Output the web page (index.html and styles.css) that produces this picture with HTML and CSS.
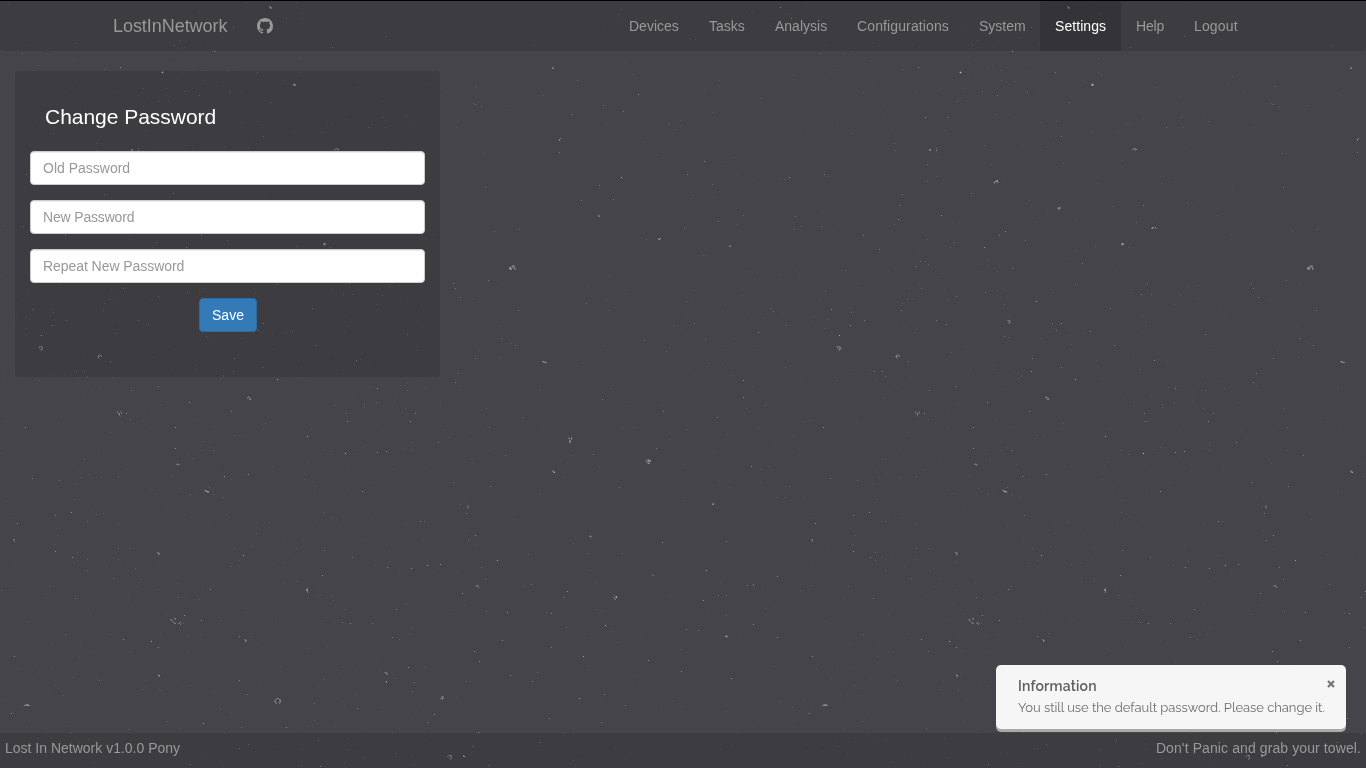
FILE: index.html
```html
<!DOCTYPE html>
<html lang="en">
<head>
<meta charset="utf-8">
<title>LostInNetwork</title>
<link rel="stylesheet" href="styles.css">
</head>
<body>
<canvas class="dust" width="1366" height="768"></canvas>
<div class="page">
  <nav class="navbar">
    <div class="brand-group">
      <a class="brand">LostInNetwork</a>
      <a class="github"><svg width="16" height="16" viewBox="0 0 16 16" fill="currentColor"><path d="M8 0C3.58 0 0 3.58 0 8c0 3.54 2.29 6.53 5.47 7.59.4.07.55-.17.55-.38 0-.19-.01-.82-.01-1.49-2.01.37-2.53-.49-2.69-.94-.09-.23-.48-.94-.82-1.13-.28-.15-.68-.52-.01-.53.63-.01 1.08.58 1.23.82.72 1.21 1.87.87 2.33.66.07-.52.28-.87.51-1.07-1.78-.2-3.64-.89-3.64-3.95 0-.87.31-1.59.82-2.15-.08-.2-.36-1.02.08-2.12 0 0 .67-.21 2.2.82.64-.18 1.32-.27 2-.27s1.36.09 2 .27c1.53-1.04 2.2-.82 2.2-.82.44 1.1.16 1.92.08 2.12.51.56.82 1.27.82 2.15 0 3.07-1.87 3.75-3.65 3.95.29.25.54.73.54 1.48 0 1.07-.01 1.93-.01 2.2 0 .21.15.46.55.38A8.01 8.01 0 0 0 16 8c0-4.42-3.58-8-8-8z"/></svg></a>
    </div>
    <div class="links">
      <a class="w80">Devices</a><a class="w66">Tasks</a><a class="w82">Analysis</a><a class="w122">Configurations</a><a class="w76">System</a><a class="w81 active">Settings</a><a class="w58">Help</a><a class="w74">Logout</a>
    </div>
  </nav>
  <main class="content">
    <form class="panel">
      <h1 class="heading">Change Password</h1>
      <input class="field" type="password" placeholder="Old Password">
      <input class="field tight" type="password" placeholder="New Password">
      <input class="field repeat" type="password" placeholder="Repeat New Password">
      <button class="save" type="button">Save</button>
    </form>
  </main>
  <footer class="footer"><span>Lost In Network v1.0.0 Pony</span><span class="motto">Don't Panic and grab your towel.</span></footer>
</div>
<aside class="toast">
  <div class="toast-title">Information</div>
  <div class="toast-text">You still use the default password. Please change it.</div>
  <svg class="close" width="8" height="8" viewBox="0 0 8 8"><path d="M1 1l6 6M7 1L1 7"/></svg>
</aside>
<script src="dust.js"></script>
</body>
</html>
```

FILE: styles.css
```css
* { box-sizing: border-box; }
body {
  margin: 0;
  height: 768px;
  overflow: hidden;
  background: #454449;
  color: #999;
  font: 14px/20px "Liberation Sans", Arial, sans-serif;
}
.dust { position: absolute; top: 0; left: 0; z-index: -1; }
.page { height: 768px; display: flex; flex-direction: column; }
.navbar {
  height: 51px;
  border-top: 1px solid #000;
  border-radius: 0 0 4px 4px;
  background: rgba(20, 16, 25, .16);
  background-clip: padding-box;
  display: flex;
  justify-content: space-between;
  padding: 0 113px;
}
.brand-group { display: flex; align-items: center; gap: 30px; }
.brand { width: 114px; font-size: 18px; letter-spacing: -.05px; }
.github { display: flex; }
.links { display: flex; }
.links a { padding: 15px 0 15px 15px; white-space: nowrap; }
.w58 { width: 58px; letter-spacing: -.15px; }
.w66 { width: 66px; }
.w74 { width: 74px; letter-spacing: .15px; }
.w76 { width: 76px; }
.w80 { width: 80px; }
.w81 { width: 81px; letter-spacing: .07px; }
.w82 { width: 82px; }
.w122 { width: 122px; letter-spacing: .12px; }
.links .active { background: rgba(20, 20, 20, .2); color: #fff; }
.content { flex: 1; padding: 20px 15px; }
.panel {
  width: 425px;
  height: 306px;
  padding: 34px 15px 0;
  border-radius: 4px;
  background: rgba(20, 16, 25, .16);
  display: flex;
  flex-direction: column;
  gap: 15px;
}
.heading { margin: 0 0 7px; padding-left: 15px; color: #fff; font-size: 21px; line-height: 24px; font-weight: 400; letter-spacing: -.03px; }
.field {
  height: 34px;
  flex: none;
  padding: 6px 12px;
  border: 1px solid #ccc;
  border-radius: 4px;
  background: #fff;
  box-shadow: inset 0 1px 1px rgba(0, 0, 0, .075);
  font: inherit;
}
.field::placeholder { color: #999; opacity: 1; }
.tight::placeholder { letter-spacing: -.17px; }
.repeat::placeholder { letter-spacing: -.06px; }
.save {
  width: 58px;
  height: 34px;
  margin-left: 169px;
  padding: 0;
  border: 1px solid #2e6da4;
  border-radius: 4px;
  background: #337ab7;
  color: #fff;
  font: inherit;
}
.footer {
  height: 35px;
  padding: 5px;
  background: rgba(20, 16, 25, .16);
  display: flex;
  justify-content: space-between;
}
.motto { letter-spacing: .1px; }
.toast {
  position: absolute;
  left: 996px;
  top: 665px;
  width: 350px;
  height: 64px;
  padding: 11px 22px;
  border-radius: 5px;
  background: #f6f6f6;
  box-shadow: 0 3px 0 #a9a9aa;
  color: #6e6e6e;
  font: 13px/21px Raleway, Lato, sans-serif;
  white-space: nowrap;
}
.toast-title { color: #5e5e5e; font-size: 14px; line-height: 21px; font-weight: 600; letter-spacing: .18px; }
.toast-text { letter-spacing: -.035px; }
.close { position: absolute; right: 11px; top: 15px; fill: none; stroke: #777; stroke-width: 2.2; }
```

FILE: dust.js
```js
// Speckled backdrop, repeating every 798px horizontally.
const PERIOD = 798;
const ctx = document.querySelector('.dust').getContext('2d');

function dot(x, y, alpha, w = 1, h = 1) {
  ctx.fillStyle = `rgba(225,225,225,${alpha})`;
  ctx.fillRect(x, y, w, h);
  ctx.fillRect(x + PERIOD, y, w, h);
}

// Single specks grouped by brightness: flat x,y pairs.
const specks = {
  0.17: [245,2,301,13,301,18,38,65,72,60,203,80,168,100,222,37,284,80,143,88,166,88,202,70,224,146,248,147,186,145,321,132,242,122,146,130,619,14,619,19,790,14,625,61,632,74,690,38,669,124,674,129,643,141,657,155,724,166,737,173,780,179,784,179,693,195,543,95,473,103,481,106,508,105,646,239,703,255,473,299,608,310,499,325,511,343,582,363,693,290,764,317,782,314,779,275,755,350,732,375,785,367,709,363,724,345,127,261,152,247,215,266,330,247,204,288,285,332,112,378,362,447,364,404,202,441,39,380,161,404,202,450,88,474,118,559,283,563,321,595,199,599,12,585,181,623,221,620,334,621,344,609,308,648,72,677,342,667,318,685,394,678,344,763,93,762,443,429,448,437,470,459,768,466,777,497,784,497,652,575,671,595,611,631,546,612,680,649,543,750],
  0.3: [174,45,22,53,199,95,229,92,332,47,257,72,138,148,263,136,173,193,104,194,26,174,621,9,623,111,603,105,687,174,577,80,475,104,571,114,559,152,599,185,581,200,613,199,684,228,718,221,795,216,794,229,488,280,453,283,455,288,460,297,518,310,501,338,515,345,475,358,455,382,458,373,694,323,771,308,773,311,786,325,149,117,23,226,65,235,101,205,81,249,117,266,122,261,156,242,201,235,214,268,345,205,349,283,343,294,312,308,187,292,158,296,66,320,103,310,123,288,138,320,148,324,206,336,292,331,258,330,84,371,76,371,110,361,234,358,316,345,131,390,231,411,213,450,346,413,32,478,59,480,324,550,178,597,75,598,342,622,372,623,239,636,392,637,386,681,241,727,357,708,248,744,415,413,505,455,453,482,490,486,593,454,656,448,619,487,663,411,717,417,602,399,468,540,481,567,531,584,563,597,726,595,718,595,698,630,551,647,537,672,427,722,414,682,625,705,549,718,601,722,563,733,158,386,55,515,466,513],
  0.46: [214,51,120,67,162,72,294,85,780,7,791,18,638,94,704,161,789,177,127,117,138,150,758,332,743,380,100,219,143,215,186,247,207,231,33,309,52,325,263,323,233,371,356,360,377,388,189,402,126,413,175,427,175,448,386,451,377,452,347,421,25,427,224,476,248,474,362,491,71,512,17,523,55,551,72,557,322,575,387,567,210,589,184,615,201,620,350,623,396,609,123,639,158,647,14,656,239,680,11,713,286,727,318,740,320,766,410,421,438,442,743,397,751,466,420,521,475,535,440,564,411,568,462,593,567,591,662,542,726,541,747,585,777,576,703,600,686,629,753,624,777,637,507,612,551,613,474,651,479,661,502,640,648,660,681,671,731,678,532,681,510,675,434,714,408,667,604,694,478,732,464,756,473,746,539,742,489,765],
  0.62: [621,177,238,301,41,335,277,379,307,436,243,555,151,641,203,723,497,560,427,565,706,570,605,625,583,656,579,698],
  0.8: [345,453]
};
for (const [alpha, list] of Object.entries(specks)) {
  for (let i = 0; i < list.length; i += 2) dot(list[i], list[i + 1], +alpha);
}

// Multi-pixel flecks: x, y, then rows of brightness digits.
const flecks = [
  [269,6,'320|253|032'],[293,83,'020|353|232'],[334,148,'01320|23034|10020'],[161,71,'020|242|020'],
  [552,67,'22|33'],[559,138,'03|40|30'],[598,215,'32|23'],[658,238,'034|340'],[729,245,'22|33'],
  [509,265,'0002320|0033220|3403230|3530032|2330022'],[542,361,'34200|02343'],[195,180,'000350|023530|230023|020100'],
  [259,207,'1232|2332|0220'],[353,227,'034030|340022'],[323,243,'343|243|020'],[209,320,'2320|0032|0220|0030'],
  [38,346,'12320|03023|02033|00132|00120'],[97,354,'00300|03032|24203|03000|00200'],[247,396,'0200|2320|2023|0033'],
  [117,411,'20020|30003|02302|00400|00200'],[176,463,'0200|2322|0020'],[204,490,'242000|024440|000320'],
  [13,539,'33|02|03'],[157,552,'320|033|030'],[306,588,'03|43|34|03|03'],[170,618,'000033|220002|032000|002000|000220|000032'],
  [178,622,'032|220|003'],[244,639,'220|033|040'],[158,674,'20|43|03'],[24,704,'023320|333443'],
  [274,698,'0023300|0220032|2200023|3200023|0320032|0030020'],[384,672,'2320|0032|0022'],[386,681,'3|3'],
  [568,437,'0203|3204|0103|0230|0430|0320'],[552,470,'210|232|035'],[645,459,'001320|023432|220345|013200|001430'],
  [712,503,'23|34'],[589,535,'020|232|020'],[467,505,'02|30|03|20'],[475,585,'0330|2022|0003'],
  [613,595,'0200|0014|2036|0300|0130'],[725,635,'030|343|020'],[440,696,'0230|0034|3240|0030'],
  [447,755,'02342|20023|02003|00023|00030'],[463,755,'30|44'],[753,584,'3|2'],[652,574,'20|02'],[131,149,'33|33']
];
for (const [x, y, rows] of flecks) {
  rows.split('|').forEach((row, j) => [...row].forEach((v, i) => {
    if (+v) dot(x + i, y + j, v * 0.12);
  }));
}

// Fine dust, thicker toward the lower left of each tile.
let seed = 417;
const rnd = () => (seed = (seed * 16807) % 2147483647) / 2147483647;
for (let i = 0; i < 1700; i++) {
  const x = Math.floor(rnd() * PERIOD), y = Math.floor(rnd() * 768);
  const density = (x < 430 ? 0.6 : 0.13) + (y > 280 ? 0.25 : 0) + (x > 730 ? 0.1 : 0);
  if (rnd() < density) dot(x, y, 0.04 + rnd() * rnd() * 0.25);
}
```
